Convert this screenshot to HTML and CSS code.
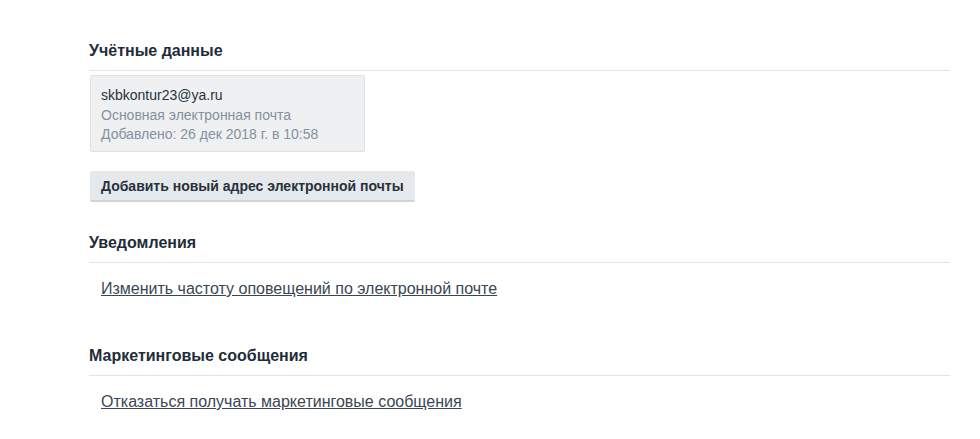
FILE: index.html
```html
<!DOCTYPE html>
<html lang="ru">
<head>
<meta charset="utf-8">
<link rel="stylesheet" href="styles.css">
</head>
<body>
<main class="page">
  <section class="section">
    <h2 class="section-title">Учётные данные</h2>
    <div class="section-body">
      <div class="email-card">
        <div class="email-address">skbkontur23@ya.ru</div>
        <div class="email-meta">Основная электронная почта</div>
        <div class="email-meta">Добавлено: 26 дек 2018 г. в 10:58</div>
      </div>
      <button class="btn">Добавить новый адрес электронной почты</button>
    </div>
  </section>
  <section class="section section-notify">
    <h2 class="section-title">Уведомления</h2>
    <div class="section-body link-body">
      <a class="link" href="#">Изменить частоту оповещений по электронной почте</a>
    </div>
  </section>
  <section class="section section-marketing">
    <h2 class="section-title">Маркетинговые сообщения</h2>
    <div class="section-body link-body">
      <a class="link" href="#">Отказаться получать маркетинговые сообщения</a>
    </div>
  </section>
</main>
</body>
</html>
```

FILE: styles.css
```css
html, body {
  margin: 0;
  padding: 0;
  background: #ffffff;
}
body {
  font-family: "Liberation Sans", Arial, sans-serif;
  color: #333333;
}
.page {
  padding: 41px 30px 0 89px;
}
.section-title {
  margin: 0;
  font-size: 16px;
  line-height: 20px;
  font-weight: bold;
  color: #1f2d3a;
  padding-bottom: 9px;
  border-bottom: 1px solid #e2e4e6;
}
.section-body {
  padding-top: 4px;
  display: flex;
  flex-direction: column;
  align-items: flex-start;
}
.email-card {
  box-sizing: border-box;
  width: 275px;
  height: 77px;
  background: #eef0f2;
  border: 1px solid #dfe2e5;
  border-radius: 2px;
  padding: 10px 10px 0 10px;
  margin-left: 1px;
  font-size: 14px;
  line-height: 19.5px;
}
.email-address {
  color: #2b3238;
}
.email-meta {
  color: #8591a0;
}
.btn {
  margin-top: 19px;
  margin-left: 1px;
  height: 31px;
  padding: 0 11px;
  border: none;
  border-bottom: 2px solid #cfd4d9;
  border-radius: 2px;
  background: #e6e9ec;
  font-family: "Liberation Sans", Arial, sans-serif;
  font-size: 14px;
  font-weight: bold;
  color: #28323c;
}
.section-notify {
  margin-top: 31px;
}
.section-marketing {
  margin-top: 47px;
}
.link-body {
  padding-top: 16px;
}
.link {
  margin-left: 12px;
  font-size: 16px;
  line-height: 20px;
  color: #3a4652;
  text-decoration: underline;
}
```
